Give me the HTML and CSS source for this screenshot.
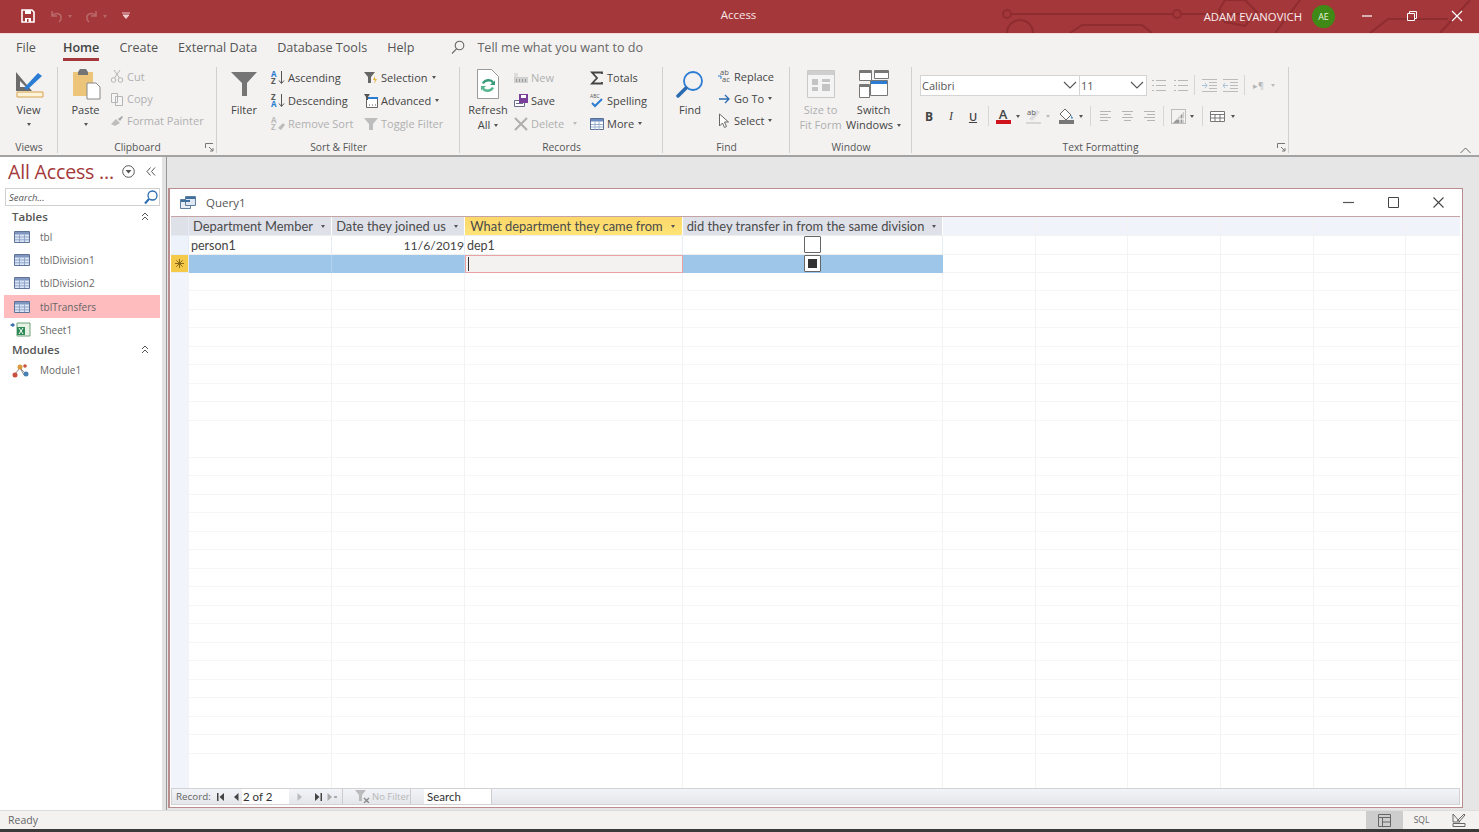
FILE: index.html
```html
<!DOCTYPE html>
<html lang="en">
<head>
<meta charset="utf-8">
<title>Access</title>
<link rel="stylesheet" href="styles.css">
</head>
<body>
<header class="titlebar">
  <svg class="circuit" width="579" height="33" viewBox="0 0 579 33" fill="none" stroke="#8f2c2f" stroke-width="2">
    <circle cx="107" cy="14" r="4"/><path d="M111 14H273"/><circle cx="277" cy="14" r="4"/><path d="M281 14H340"/>
    <circle cx="120" cy="33" r="13"/><path d="M170 33l12-8h60l10 8"/><path d="M345 0l12 12-12 14-20-4-6-12 6-10zM375 33l25-33M470 33l18-14h60M540 33l30-33"/>
  </svg>
  <div class="qat">
    <svg class="qat-save" width="14" height="14" viewBox="0 0 14 14"><path d="M1 1h10l2 2v10H1z" fill="none" stroke="#fff" stroke-width="1.6"/><path d="M4 1h6v4H4zM4 9h6v4H4z" fill="#fff"/><path d="M6 10h1.5v3H6z" fill="#a4373a"/></svg>
    <svg width="15" height="13" viewBox="0 0 15 13" fill="none" stroke="#b9686a" stroke-width="1.6"><path d="M3 1v5h5M3 6c3-4 10-3 9 3 0 1-1 2-2 3"/></svg><i class="qat-caret"></i>
    <svg width="15" height="13" viewBox="0 0 15 13" fill="none" stroke="#b9686a" stroke-width="1.6"><path d="M12 1v5H7M12 6C9 2 2 3 3 9c0 1 1 2 2 3"/></svg><i class="qat-caret"></i>
    <svg class="qat-more" width="10" height="8" viewBox="0 0 10 8"><path d="M1 1h8M2 3l3 3.500L8 3z" fill="#f0d2d2" stroke="#eec9c9"/></svg>
  </div>
  <div class="app-title">Access</div>
  <div class="account">
    <span class="user">ADAM EVANOVICH</span>
    <span class="avatar">AE</span>
    <span class="winbtns">
      <svg width="12" height="12" viewBox="0 0 12 12"><path d="M1 6h10" stroke="#fff" stroke-width="1.2"/></svg>
      <svg width="12" height="12" viewBox="0 0 12 12" fill="none" stroke="#fff"><path d="M1.5 3.5h7v7h-7zM3.5 3.5v-2h7v7h-2"/></svg>
      <svg width="12" height="12" viewBox="0 0 12 12" stroke="#fff" stroke-width="1.2"><path d="M1 1l10 10M11 1L1 11"/></svg>
    </span>
  </div>
</header>

<nav class="tabs">
  <span class="tab">File</span>
  <span class="tab active">Home</span>
  <span class="tab">Create</span>
  <span class="tab">External Data</span>
  <span class="tab">Database Tools</span>
  <span class="tab">Help</span>
  <svg class="tell-icon" width="14" height="15" viewBox="0 0 14 15" fill="none" stroke="#666" stroke-width="1.1"><circle cx="8.5" cy="5.5" r="4.3"/><path d="M5.5 8.8L1 13.5"/></svg>
  <span class="tell">Tell me what you want to do</span>
</nav>

<section class="ribbon">
  <div class="group g-views">
    <div class="group-body">
      <div class="large w-view">
        <svg class="licon" width="30" height="30" viewBox="0 0 30 30"><path d="M2 3v19h16z" fill="#6b6b6b"/><path d="M6 12v6h6z" fill="#f3f2f1"/><path d="M10 19L24 4l4 3-15 14z" fill="#2b7cd3"/><path d="M3 23h26v5H3z" fill="#fdf3d8" stroke="#d8a24a"/></svg>
        <span>View</span><i class="caret"></i>
      </div>
    </div>
    <div class="group-label">Views</div>
  </div>

  <div class="group g-clip">
    <div class="group-body">
      <div class="large w-paste">
        <svg class="licon" width="30" height="32" viewBox="0 0 30 32"><path d="M2 4h20v24H2z" fill="#edc57a"/><path d="M7 4l2-3h6l2 3v3H7z" fill="#757575"/><path d="M16 15h9l4 4v12H16z" fill="#fff" stroke="#888"/></svg>
        <span>Paste</span><i class="caret"></i>
      </div>
      <div class="small-col tight">
        <div class="sm off"><svg width="14" height="14" viewBox="0 0 14 14" fill="none" stroke="#b5b5b5"><circle cx="3.5" cy="11" r="2.3"/><circle cx="10.5" cy="11" r="2.3"/><path d="M4.5 9L10 1M9.5 9L4 1"/></svg><span>Cut</span></div>
        <div class="sm off"><svg width="14" height="14" viewBox="0 0 14 14" fill="#f5f5f5" stroke="#b5b5b5"><path d="M1.500 1.500h6v9h-6zM5.500 4.500h7v9h-7z"/></svg><span>Copy</span></div>
        <div class="sm off"><svg width="14" height="14" viewBox="0 0 14 14"><path d="M1 10l5-5 4 4-5 3z" fill="#bdbdbd"/><path d="M8 5l4-3 1 1-3 4z" fill="#a8a8a8"/></svg><span>Format Painter</span></div>
      </div>
    </div>
    <div class="group-label">Clipboard<svg class="launcher" width="9" height="9" viewBox="0 0 9 9" fill="none" stroke="#777"><path d="M.5 5V.5H8M4 4l4 4M8 5v3H5"/></svg></div>
  </div>

  <div class="group g-sort">
    <div class="group-body">
      <div class="large w-filter">
        <svg class="licon" width="26" height="26" viewBox="0 0 26 26"><path d="M0 1h26L16 12v13h-5V12z" fill="#757575"/></svg>
        <span>Filter</span>
      </div>
      <div class="small-col w-sort1">
        <div class="sm"><svg width="14" height="15" viewBox="0 0 14 15"><text class="az"><tspan x="0" y="7" class="blue">A</tspan><tspan x="0" y="14">Z</tspan></text><path d="M10.500 1v12M8 10.500l2.500 3 2.500-3" fill="none" stroke="#555"/></svg><span>Ascending</span></div>
        <div class="sm"><svg width="14" height="15" viewBox="0 0 14 15"><text class="az"><tspan x="0" y="7">Z</tspan><tspan x="0" y="14" class="blue">A</tspan></text><path d="M10.500 1v12M8 10.500l2.500 3 2.500-3" fill="none" stroke="#555"/></svg><span>Descending</span></div>
        <div class="sm off"><svg width="14" height="15" viewBox="0 0 14 15"><text class="az dim"><tspan x="0" y="7">A</tspan><tspan x="0" y="14">Z</tspan></text><path d="M7 12l5-5 2 2-4 5z" fill="#bbb"/></svg><span>Remove Sort</span></div>
      </div>
      <div class="small-col">
        <div class="sm"><svg width="14" height="14" viewBox="0 0 14 14"><path d="M0 1h11L7 6v6H4V6z" fill="#666"/><path d="M11 5l-2 4h2l-1 4 3-5h-2z" fill="#e8b23a"/></svg><span>Selection</span><i class="caret"></i></div>
        <div class="sm"><svg width="14" height="14" viewBox="0 0 14 14"><path d="M2.500 3.500h11v10h-11z" fill="#fff" stroke="#666"/><path d="M2 3h12v2H2z" fill="#2b7cd3"/><path d="M0 0h6L4 3v3H2V3z" fill="#555"/><path d="M5 11h1M8 11h1M11 11h1" stroke="#555"/></svg><span>Advanced</span><i class="caret"></i></div>
        <div class="sm off"><svg width="14" height="14" viewBox="0 0 14 14"><path d="M0 1h14L9 7v6H5V7z" fill="#bdbdbd"/></svg><span>Toggle Filter</span></div>
      </div>
    </div>
    <div class="group-label">Sort &amp; Filter</div>
  </div>

  <div class="group g-rec">
    <div class="group-body">
      <div class="large w-refresh">
        <svg class="licon" width="24" height="30" viewBox="0 0 24 30"><path d="M1.500.5h14l7 7v22h-21z" fill="#fff" stroke="#999"/><path d="M6 14c2-5 10-5 12-1l1-2v5h-5l2-2c-2-2-6-2-8 1z" fill="#3a9a7a"/><path d="M18 19c-2 5-10 5-12 1l-1 2v-5h5l-2 2c2 2 6 2 8-1z" fill="#58b58f"/></svg>
        <span>Refresh</span><span>All<i class="caret"></i></span>
      </div>
      <div class="small-col w-rec1">
        <div class="sm off"><svg width="14" height="14" viewBox="0 0 14 14"><path d="M0 6h14v6H0z" fill="#d0d0d0"/><path d="M2 8h1v3H2zM5 8h1v3H5zM8 8h1v3H8zM11 8h1v3h-1z" fill="#999"/><path d="M0 2h4v4H0z" fill="#ddd"/></svg><span>New</span></div>
        <div class="sm"><svg width="14" height="14" viewBox="0 0 14 14"><path d="M.5 6.500h10v6H.5z" fill="#fff" stroke="#6a6a8a"/><path d="M2 9h7v1H2z" fill="#6a6a8a"/><path d="M5 0h9v9H5z" fill="#7a3f98"/><path d="M7 1h5v3H7z" fill="#fff"/></svg><span>Save</span></div>
        <div class="sm off"><svg width="14" height="14" viewBox="0 0 14 14" stroke="#b0b0b0" stroke-width="2.200"><path d="M1 1l12 12M13 1L1 13"/></svg><span>Delete</span><i class="caret off-caret del-caret"></i></div>
      </div>
      <div class="small-col">
        <div class="sm"><svg width="14" height="14" viewBox="0 0 14 14" fill="none" stroke="#444" stroke-width="1.800"><path d="M12 3V1.500H2L7 7l-5 5.500h10V11"/></svg><span>Totals</span></div>
        <div class="sm"><svg width="14" height="15" viewBox="0 0 14 15"><text x="0" y="5" class="abc">ABC</text><path d="M2 10l3 3 7-7" fill="none" stroke="#2b7cd3" stroke-width="2"/></svg><span>Spelling</span></div>
        <div class="sm"><svg width="14" height="14" viewBox="0 0 14 14"><path d="M.5 1.500h13v11H.5z" fill="#fff" stroke="#5a6f96"/><path d="M1 2h12v2.500H1z" fill="#6a8ac0"/><path d="M1 7.500h12M1 10h12M5 4v9M9 4v9" stroke="#9bb0d0"/></svg><span>More</span><i class="caret"></i></div>
      </div>
    </div>
    <div class="group-label">Records</div>
  </div>

  <div class="group g-find">
    <div class="group-body">
      <div class="large w-find">
        <svg class="licon" width="28" height="28" viewBox="0 0 28 28" fill="none"><circle cx="17" cy="11" r="9" stroke="#2b7cd3" stroke-width="1.800"/><path d="M10 18l-8 8" stroke="#2b6cb0" stroke-width="3.500" stroke-linecap="round"/></svg>
        <span>Find</span>
      </div>
      <div class="small-col tight">
        <div class="sm"><svg width="14" height="14" viewBox="0 0 14 14"><text class="abc big"><tspan x="3" y="6">ab</tspan><tspan x="5" y="13">ac</tspan></text><path d="M1 7h3v3" fill="none" stroke="#2b7cd3"/></svg><span>Replace</span></div>
        <div class="sm"><svg width="14" height="14" viewBox="0 0 14 14" fill="none" stroke="#2b6cb0" stroke-width="1.300"><path d="M2 7h10M8 3l4 4-4 4"/></svg><span>Go To</span><i class="caret"></i></div>
        <div class="sm"><svg width="14" height="15" viewBox="0 0 14 15" fill="#fff" stroke="#666"><path d="M2.500 1l9 8H7.500l2 4.500-2 1-2-4.500-3 3z"/></svg><span>Select</span><i class="caret"></i></div>
      </div>
    </div>
    <div class="group-label">Find</div>
  </div>

  <div class="group g-win">
    <div class="group-body">
      <div class="large w-size off">
        <svg class="licon" width="30" height="30" viewBox="0 0 30 30"><path d="M1.500 1.500h27v27h-27z" fill="#f4f4f4" stroke="#c8c8c8"/><path d="M2 2h26v4H2z" fill="#cfcfcf"/><path d="M6 10h6v6H6zM16 10h8v3h-8zM16 15h8v7h-8zM6 18h6v4H6z" fill="#c4c4c4"/></svg>
        <span>Size to</span><span>Fit Form</span>
      </div>
      <div class="large w-switch">
        <svg class="licon" width="30" height="30" viewBox="0 0 30 30" fill="#fff" stroke="#777"><path d="M.5 1.500h12v10H.5zM15.500 1.500h14v8h-14zM.5 15.500h10v13H.5z"/><path d="M1 2h11v2H1zM16 2h13v2H16zM1 16h9v2H1z" fill="#777" stroke="none"/><path d="M11.500 11.500h17v15h-17z"/><path d="M12 12h16v3H12z" fill="#2b7cd3" stroke="none"/></svg>
        <span>Switch</span><span>Windows<i class="caret"></i></span>
      </div>
    </div>
    <div class="group-label">Window</div>
  </div>

  <div class="group g-text">
    <div class="group-body col">
      <div class="fmt-row top">
        <div class="combo font"><span>Calibri</span><svg width="14" height="8" viewBox="0 0 14 8" fill="none" stroke="#555" stroke-width="1.100"><path d="M1 1l6 6 6-6"/></svg></div>
        <div class="combo size"><span>11</span><svg width="14" height="8" viewBox="0 0 14 8" fill="none" stroke="#555" stroke-width="1.100"><path d="M1 1l6 6 6-6"/></svg></div>
        <svg class="fi f-l1" width="15" height="14" viewBox="0 0 15 14" stroke="#b8b8b8"><path d="M5 2.500h10M5 7.500h10M5 12.500h10M1 2.500h2M1 7.500h2M1 12.500h2"/></svg>
        <svg class="fi f-l2" width="15" height="14" viewBox="0 0 15 14" stroke="#b8b8b8"><path d="M5 2.500h10M5 7.500h10M5 12.500h10M1 2.500h2M1 7.500h2M1 12.500h2"/></svg>
        <i class="vsep s1"></i>
        <svg class="fi f-i1" width="15" height="14" viewBox="0 0 15 14" stroke="#bbb"><path d="M0 1.500h15M7 4.500h8M7 7.500h8M7 10.500h8M0 13.500h15" /><path d="M0 7.500h5M3 5l2 2.500L3 10" fill="none" stroke="#a9c3d8"/></svg>
        <svg class="fi f-i2" width="15" height="14" viewBox="0 0 15 14" stroke="#bbb"><path d="M0 1.500h15M7 4.500h8M7 7.500h8M7 10.500h8M0 13.500h15"/><path d="M5 7.500H0M2 5L0 7.500 2 10" fill="none" stroke="#a9c3d8"/></svg>
        <i class="vsep s2"></i>
        <span class="pil">▸¶</span><i class="caret off-caret"></i>
      </div>
      <div class="fmt-row bottom">
        <b class="fb">B</b><em class="fb fi2">I</em><u class="fb fu">U</u>
        <i class="vsep s3"></i>
        <span class="colorbtn"><span class="a-letter">A</span><i class="bar red"></i></span><i class="caret"></i>
        <svg class="fi hl" width="16" height="16" viewBox="0 0 16 16"><path d="M3 11l8-9 3 2-8 9z" fill="#ddd"/><text x="1" y="7" class="abc big">ab</text><path d="M0 14h15v2H0z" fill="#d6d6d6"/></svg><i class="caret off-caret"></i>
        <span class="colorbtn fill"><svg width="16" height="12" viewBox="0 0 16 12"><path d="M7 1l6 6-5 5-6-6z" fill="#fff" stroke="#666"/><path d="M13 7c1 2 2 2 2 3s-2 1-2 0z" fill="#4a90c8"/></svg><i class="bar grey"></i></span><i class="caret"></i>
        <i class="vsep s4"></i>
        <svg class="fi al" width="13" height="12" viewBox="0 0 13 12" stroke="#b5b5b5"><path d="M1 1.500h11M1 4.500h8M1 7.500h11M1 10.500h8"/></svg>
        <svg class="fi al2" width="13" height="12" viewBox="0 0 13 12" stroke="#b5b5b5"><path d="M1 1.500h11M3 4.500h7M1 7.500h11M3 10.500h7"/></svg>
        <svg class="fi al2" width="13" height="12" viewBox="0 0 13 12" stroke="#b5b5b5"><path d="M1 1.500h11M4 4.500h8M1 7.500h11M4 10.500h8"/></svg>
        <i class="vsep s5"></i>
        <svg class="fi gr" width="15" height="15" viewBox="0 0 15 15" fill="none"><path d="M.5.500h14v14H.5z" stroke="#888" stroke-dasharray="1 1"/><path d="M2 14L13 3v11z" fill="#999"/><path d="M6 10h8M9 7v7M12 4v10" stroke="#fff"/></svg><i class="caret"></i>
        <i class="vsep s6"></i>
        <svg class="fi gr2" width="15" height="11" viewBox="0 0 15 11" fill="#fff" stroke="#777"><path d="M.5.500h14v10H.5z"/><path d="M1 3.500h13M1 7h13M5 3v7M10 3v7"/></svg><i class="caret gr2c"></i>
      </div>
    </div>
    <div class="group-label">Text Formatting<svg class="launcher" width="9" height="9" viewBox="0 0 9 9" fill="none" stroke="#777"><path d="M.5 5V.5H8M4 4l4 4M8 5v3H5"/></svg></div>
  </div>
  <svg class="collapse" width="11" height="7" viewBox="0 0 11 7" fill="none" stroke="#666"><path d="M.5 6l5-5 5 5"/></svg>
</section>

<main class="workspace">
  <aside class="navpane">
    <div class="nav-head">
      <span class="nav-title">All Access ...</span>
      <svg width="13" height="13" viewBox="0 0 13 13" fill="none"><circle cx="6.500" cy="6.500" r="5.800" stroke="#555"/><path d="M3.500 5h6l-3 3.500z" fill="#555"/></svg>
      <svg class="nav-shut" width="10" height="9" viewBox="0 0 10 9" fill="none" stroke="#555"><path d="M4.500.5L1 4.500l3.500 4M9 .5L5.500 4.500 9 8.500"/></svg>
    </div>
    <div class="nav-search"><span>Search...</span><svg width="14" height="15" viewBox="0 0 14 15" fill="none" stroke="#2b6cb0"><circle cx="8.500" cy="5.500" r="4.500" stroke-width="1.300"/><path d="M5 9l-4 4.500" stroke-width="2"/></svg></div>
    <div class="nav-sec"><span>Tables</span><svg width="8" height="9" viewBox="0 0 8 9" fill="none" stroke="#555"><path d="M1 4l3-3 3 3M1 8l3-3 3 3"/></svg></div>
    <div class="nav-item"><svg class="tbl" width="16" height="12" viewBox="0 0 16 12"><use href="#tbl-icon"/></svg><span>tbl</span></div>
    <div class="nav-item"><svg class="tbl" width="16" height="12" viewBox="0 0 16 12"><use href="#tbl-icon"/></svg><span>tblDivision1</span></div>
    <div class="nav-item"><svg class="tbl" width="16" height="12" viewBox="0 0 16 12"><use href="#tbl-icon"/></svg><span>tblDivision2</span></div>
    <div class="nav-item selected"><svg class="tbl" width="16" height="12" viewBox="0 0 16 12"><use href="#tbl-icon"/></svg><span>tblTransfers</span></div>
    <div class="nav-item wide"><svg class="xl" width="21" height="15" viewBox="0 0 21 15"><path d="M0 3l3-2 2 2-2 2z" fill="#3a6fb0"/><path d="M7 1h13v13H7z" fill="#e6f2e6" stroke="#6fa078"/><path d="M7 5h8v8H7z" fill="#2e8b57"/><path d="M9 6l4 6M13 6l-4 6" stroke="#fff"/></svg><span>Sheet1</span></div>
    <div class="nav-sec mod"><span>Modules</span><svg width="8" height="9" viewBox="0 0 8 9" fill="none" stroke="#555"><path d="M1 4l3-3 3 3M1 8l3-3 3 3"/></svg></div>
    <div class="nav-item wide"><svg class="mi" width="18" height="15" viewBox="0 0 18 15"><path d="M2 12L8 5l4 7M8 5l6 6" stroke="#8a8a8a" fill="none"/><circle cx="3" cy="12" r="2.500" fill="#c8503c"/><circle cx="8" cy="4" r="2.500" fill="#d89a3a"/><circle cx="14" cy="11" r="2.500" fill="#4a7fb5"/><circle cx="13" cy="3" r="1.800" fill="#c8503c"/></svg><span>Module1</span></div>
  </aside>

  <div class="mdi">
    <section class="docwin">
      <div class="doc-title">
        <svg width="16" height="13" viewBox="0 0 16 13"><path d="M.5 3.500h10v9H.5z" fill="#e8eef6" stroke="#5f7f9f"/><path d="M5.500.5h10v9h-10z" fill="#dfe8f2" stroke="#5f7f9f"/><path d="M6 1h9v2H6zM1 4h9v2H1z" fill="#3f6f9f"/></svg>
        <span class="doc-name">Query1</span>
        <span class="doc-btns">
          <svg width="11" height="11" viewBox="0 0 11 11"><path d="M0 5.500h11" stroke="#555" stroke-width="1.200"/></svg>
          <svg width="11" height="11" viewBox="0 0 11 11" fill="none" stroke="#444"><path d="M.5.500h10v10H.5z"/></svg>
          <svg width="11" height="11" viewBox="0 0 11 11" stroke="#444" stroke-width="1.100"><path d="M.5.500l10 10M10.500.5l-10 10"/></svg>
        </span>
      </div>
      <div class="sheet">
        <div class="ds-row head">
          <div class="c sel"></div>
          <div class="c h">Department Member<i class="caret"></i></div>
          <div class="c h">Date they joined us<i class="caret"></i></div>
          <div class="c h hot">What department they came from<i class="caret"></i></div>
          <div class="c h">did they transfer in from the same division<i class="caret"></i></div>
          <div class="c x"></div><div class="c x"></div><div class="c x"></div><div class="c x"></div><div class="c x"></div><div class="c x last"></div>
        </div>
        <div class="ds-row">
          <div class="c sel"></div>
          <div class="c t">person1</div>
          <div class="c t right">11/6/2019</div>
          <div class="c t">dep1</div>
          <div class="c mid"><i class="check"></i></div>
          <div class="c x"></div><div class="c x"></div><div class="c x"></div><div class="c x"></div><div class="c x"></div><div class="c x last"></div>
        </div>
        <div class="ds-row newrow">
          <div class="c sel star"><svg width="9" height="9" viewBox="0 0 9 9" stroke="#8a6a1a"><path d="M4.500 0v9M0 4.500h9M1.300 1.300l6.400 6.400M7.700 1.300L1.300 7.700"/></svg></div>
          <div class="c b"></div>
          <div class="c b"></div>
          <div class="c focus"><i class="cursor"></i></div>
          <div class="c b mid"><i class="check on"></i></div>
          <div class="c x"></div><div class="c x"></div><div class="c x"></div><div class="c x"></div><div class="c x"></div><div class="c x last"></div>
        </div>
        <div class="ds-row fill">
          <div class="c sel"></div><div class="c"></div><div class="c"></div><div class="c"></div><div class="c"></div>
          <div class="c x"></div><div class="c x"></div><div class="c x"></div><div class="c x"></div><div class="c x"></div><div class="c x last"></div>
        </div>
      </div>
      <div class="recnav">
        <span class="rec-label">Record:</span>
        <svg class="rb r1" width="8" height="8" viewBox="0 0 8 8" fill="#444"><path d="M0 0h1.500v8H0zM7 0v8L2.500 4z"/></svg>
        <svg class="rb r2" width="6" height="8" viewBox="0 0 6 8" fill="#444"><path d="M5.500 0v8L1 4z"/></svg>
        <span class="rec-input">2 of 2</span>
        <svg class="rb r3" width="6" height="8" viewBox="0 0 6 8" fill="#bbb"><path d="M.5 0v8L5 4z"/></svg>
        <svg class="rb r4" width="8" height="8" viewBox="0 0 8 8" fill="#444"><path d="M1 0v8l4.500-4zM6.500 0H8v8H6.500z"/></svg>
        <svg class="rb r5" width="10" height="8" viewBox="0 0 10 8" fill="#aaa"><path d="M.5 0v8L5 4zM7 3h3v2H7z"/></svg>
        <i class="rec-sep"></i>
        <svg class="rb r6" width="15" height="13" viewBox="0 0 15 13"><path d="M0 0h11L7 5v6H4V5z" fill="#bbb"/><path d="M9 8l5 5M14 8l-5 5" stroke="#888" stroke-width="1.300"/></svg>
        <span class="rec-off">No Filter</span>
        <i class="rec-sep s"></i>
        <span class="rec-search">Search</span>
      </div>
    </section>
  </div>
</main>

<footer class="statusbar">
  <span>Ready</span>
  <div class="views">
    <span class="v on"><svg width="13" height="13" viewBox="0 0 13 13" fill="none" stroke="#666"><path d="M.5.500h12v12H.5zM.5 3.500h12M4.500 3.500v9M4.500 8h8"/></svg></span>
    <span class="v sql">SQL</span>
    <span class="v"><svg width="14" height="14" viewBox="0 0 14 14" fill="none" stroke="#666"><path d="M1 1v8h7zM5 8l7-7 1 1-6 7"/><path d="M1 10.500h12v3H1z"/></svg></span>
  </div>
</footer>

<svg class="defs" width="0" height="0">
  <symbol id="tbl-icon" viewBox="0 0 16 12">
    <path d="M.5.500h15v11H.5z" fill="#dbe5f5" stroke="#5f7396"/><path d="M1 1h14v2.500H1z" fill="#7f97c0"/><path d="M1 6h14M1 8.800h14M5.500 3.500V11M10.500 3.500V11" stroke="#90a5c8"/>
  </symbol>
</svg>
</body>
</html>
```

FILE: styles.css
```css
* { box-sizing: border-box; }
html, body { margin: 0; height: 832px; overflow: hidden; }
body {
  display: flex; flex-direction: column; width: 1479px;
  font-family: "Open Sans", "Noto Sans", sans-serif; font-size: 11px; color: #444; background: #f3f2f1;
}
.defs { position: absolute; }
i { font-style: normal; }

/* title bar */
.titlebar {
  position: relative; flex: 0 0 34px; display: flex; align-items: center; height: 34px;
  background: #a4373a; border-bottom: 1px solid #f5dada; color: #fff; padding-bottom: 1px;
}
.circuit { position: absolute; left: 900px; top: 0; }
.qat { position: relative; display: flex; align-items: center; padding-left: 21px; width: 600px; }
.qat svg { margin-right: 3px; }
.qat-save { margin-right: 14px !important; }
.qat-caret { width: 0; height: 0; border: 2px solid transparent; border-top: 3px solid #b9686a; margin: 2px 12px 0 1px; }
.qat-more { margin-left: 2px; }
.app-title { position: relative; width: 277px; text-align: center; font-size: 11.5px; color: #f9e6e6; padding-bottom: 3px; }
.account { position: relative; display: flex; align-items: center; margin-left: auto; }
.user { font-size: 11.3px; color: #fbeeee; }
.avatar {
  width: 23px; height: 23px; margin-left: 10px; border-radius: 50%; background: #3f8a16; color: #e6f2da;
  font-size: 9px; display: flex; align-items: center; justify-content: center;
}
.winbtns { display: flex; gap: 33px; margin-left: 26px; padding-right: 16px; }

/* tabs */
.tabs { flex: 0 0 27px; display: flex; align-items: center; position: relative; font-size: 12.6px; }
.tab { position: relative; color: #555; padding: 0 10px; height: 100%; display: flex; align-items: center; white-space: nowrap; }
.tab:first-child { padding-left: 16px; padding-right: 17px; }
.tab.active { font-weight: 600; color: #444; padding: 0; margin-right: 10px; margin-left: 10px; }
.tab.active::after { content: ""; position: absolute; left: 0; right: 0; bottom: 0; height: 3px; background: #a4373a; }
.tell-icon { margin-right: 12px; margin-left: 27px; }
.tell { color: #666; font-size: 12.6px; }

/* ribbon */
.ribbon { position: relative; flex: 0 0 96px; display: flex; background: #f3f2f1; border-bottom: 2px solid #a3a3a3; }
.group { display: flex; flex-direction: column; position: relative; padding-top: 5px; }
.group::after { content: ""; position: absolute; right: 0; top: 6px; bottom: 2px; width: 1px; background: #d0d0d0; }
.group-body { flex: 1; display: flex; }
.group-body.col { flex-direction: column; }
.group-label { position: relative; height: 16px; text-align: center; font-size: 10.3px; line-height: 16px; color: #555; }
.launcher { position: absolute; right: 3px; top: 4px; }
.g-views { width: 58px; } .g-clip { width: 159px; } .g-sort { width: 243px; }
.g-rec { width: 203px; } .g-find { width: 127px; } .g-win { width: 122px; } .g-text { width: 377px; }

.large { display: flex; flex-direction: column; align-items: center; white-space: nowrap; line-height: 15px; }
.large .licon { height: 34px; margin-top: 1px; margin-bottom: 1px; }
.large.off { color: #b0b0b0; }
.w-view { width: 57px; }
.w-paste { width: 55px; margin-right: -3px; }
.w-filter { width: 54px; }
.w-sort1 { width: 93px; }
.w-refresh { width: 56px; margin-right: -2px; }
.w-rec1 { width: 76px; }
.w-find { width: 54px; }
.w-size { width: 61px; }
.w-switch { width: 45px; margin-left: 0; }
.g-text .group-body { padding-left: 8px; }

.small-col { display: flex; flex-direction: column; }
.small-col .sm { height: 23px; display: flex; align-items: center; white-space: nowrap; }
.small-col.tight { margin-top: -1px; }
.small-col.tight .sm { height: 22.4px; }
.sm svg { flex: none; margin-right: 3px; overflow: visible; }
.sm.off { color: #b0b0b0; }
.az { font: 700 8px "Open Sans", sans-serif; fill: #555; }
.az .blue { fill: #2b7cd3; }
.az.dim { fill: #bbb; }
.abc { font: 5px "Open Sans", sans-serif; fill: #555; }
.abc.big { font-size: 7.5px; }

.caret { display: inline-block; width: 0; height: 0; margin-left: 4px; vertical-align: 2px; border: 2.5px solid transparent; border-top: 3px solid #555; border-bottom-width: 0; flex: none; }
.off-caret { border-top-color: #bbb; }
.del-caret { margin-left: 9px; }
.large > .caret { margin: 6px 0 0; }

/* text formatting */
.fmt-row { display: flex; align-items: center; }
.fmt-row.top { height: 20px; margin-top: 9px; }
.fmt-row.bottom { height: 20px; margin-top: 11px; margin-left: -2px; }
.combo { display: flex; align-items: center; justify-content: space-between; height: 21px; background: #fff; border: 1px solid #d4d4d4; padding: 0 2px 0 1px; font-size: 11px; color: #555; }
.combo.font { width: 160px; }
.combo.size { width: 67px; border-left: 0; }
.fi { flex: none; }
.f-l1 { margin-left: 4px; } .f-l2 { margin-left: 7px; }
.vsep { flex: none; width: 1px; height: 20px; background: #d6d6d6; }
.s1 { margin-left: 6px; } .f-i1 { margin-left: 7px; } .f-i2 { margin-left: 6px; } .s2 { margin-left: 6px; }
.pil { margin-left: 8px; color: #b5b5b5; font-size: 9px; }
.pil + .caret { margin-left: 7px; }
.fb { width: 22px; text-align: center; font-family: "Liberation Serif", serif; font-size: 12px; color: #444; text-decoration: none; }
.fu { text-decoration: underline; font-family: "Open Sans", sans-serif; font-weight: 600; font-size: 11px; }
b.fb { font-family: "Open Sans", sans-serif; font-size: 12px; }
.s3 { margin-left: 4px; }
.colorbtn { display: flex; flex-direction: column; align-items: center; width: 16px; margin-left: 6px; line-height: 12px; }
.a-letter { font-size: 13px; font-weight: 600; color: #444; }
.bar { display: block; width: 15px; height: 4px; }
.bar.red { background: #d0121b; }
.bar.grey { background: #777; }
.colorbtn + .caret { margin-left: 5px; margin-right: 0; }
.hl { margin-left: 6px; }
.hl + .caret { margin-left: 4px; }
.colorbtn.fill { margin-left: 8px; }
.s4 { margin-left: 7px; }
.al { margin-left: 8px; } .al2 { margin-left: 9px; }
.s5 { margin-left: 7px; } .gr { margin-left: 7px; }
.s6 { margin-left: 8px; } .gr2 { margin-left: 7px; }
.gr2c { margin-left: 6px; }
.collapse { position: absolute; right: 8px; bottom: 1px; }

/* workspace */
.workspace { flex: 1; display: flex; min-height: 0; }
.navpane { width: 166px; flex: none; background: #fff; border-right: 4px solid #e3e3e3; padding: 4px 2px 0 4px; }
.nav-head { display: flex; align-items: center; height: 26px; padding: 0 0 6px 4px; }
.nav-title { width: 114px; font-size: 19.6px; color: #a4373a; white-space: nowrap; letter-spacing: -.2px; }
.nav-shut { margin-left: 11px; }
.nav-search { display: flex; align-items: center; justify-content: space-between; height: 18px; margin: 1px 0 0 1px; border: 1px solid #d0d0d0; padding: 0 1px 0 3px; }
.nav-search span { font-style: italic; font-size: 9.5px; color: #555; }
.nav-sec { display: flex; justify-content: space-between; align-items: center; height: 18px; margin-top: 1px; padding: 0 11px 0 8px; font-weight: 600; font-size: 11.5px; color: #555; }
.nav-sec.mod { height: 17px; margin-top: 0; }
.nav-item { display: flex; align-items: center; height: 23.3px; font-size: 10px; color: #666; padding-left: 10px; white-space: nowrap; }
.nav-item.selected { background: #ffbcbf; }
.nav-item.wide { padding-left: 6px; }
.nav-item .tbl { margin-right: 10px; }
.nav-item .xl { margin: 0 9px 0 0; }
.nav-item .mi { margin: 0 10px 0 2px; }

.mdi { flex: 1; background: #e6e6e6; padding: 31px 16px 2px 1px; border-left: 1px solid #999; min-width: 0; }
.docwin { height: 100%; display: flex; flex-direction: column; background: #fff; border: 1px solid #ba8d8f; border-left-width: 2px; padding: 0 2px 2px 1px; }
.doc-title { flex: 0 0 28px; display: flex; align-items: center; padding-left: 9px; border-bottom: 1px solid #c6a3a4; }
.doc-name { margin-left: 10px; font-size: 11.5px; color: #555; }
.doc-btns { margin-left: auto; display: flex; gap: 34px; padding-right: 16px; }

.sheet { flex: 1; display: flex; flex-direction: column; min-height: 0; font-family: Lato, "Open Sans", sans-serif; font-size: 12.5px; color: #444; }
.ds-row { display: grid; flex: 0 0 18.5px; grid-template-columns: 18px 143px 133px 218px 260px 93px 92px 93px 93px 92px 1fr; }
.ds-row.head { flex-basis: 19px; font-size: 12.9px; color: #4a4a4a; }
.c { border-right: 1px solid #e8ecf4; border-bottom: 1px solid #eee; padding: 0 2px; display: flex; align-items: center; white-space: nowrap; min-width: 0; }
.c.t { padding-top: 1px; }
.c.x { border-color: #f3f3f3; }
.c.x.last { border-right: 0; }
.c.sel { background: #eef2fa; border-color: #e6eaf2; padding: 0; justify-content: center; }
.head .c { background: #f0f3fa; }
.head .c.sel { background: #dfe1e9; }
.c.h { background: #dfe1e9 !important; border-right: 1px solid #fff; justify-content: center; padding: 0 2px 0 0; }
.c.h .caret { margin-left: 8px; }
.c.h.hot { background: linear-gradient(#fcd76a, #ffe477) !important; }
.c.right { justify-content: flex-end; padding-right: 0; font-size: 12.2px; }
.c.mid { justify-content: center; }
.check { display: block; width: 17px; height: 17px; background: #fff; border: 1px solid #666; border-radius: 1px; }
.check.on { position: relative; }
.check.on::after { content: ""; position: absolute; inset: 3px; background: #333; }
.newrow .c.b { background: #9dc6e8; border-color: #9dc6e8; }
.newrow .c.b:not(.mid) { border-right-color: #b5d3ec; }
.c.star { background: #f5c94a; }
.c.focus { background: #f3f2f1; border: 1px solid #e8a3a6; padding: 0 0 0 2px; }
.cursor { display: block; width: 1px; height: 14px; background: #333; }
.ds-row.fill { flex: 1; background: repeating-linear-gradient(#fff 0 17.5px, #f6f6f6 17.5px 18.500px); }
.fill .c { border-bottom: 0; border-right-color: #f3f3f3; }
.fill .c.sel { background: #f1f4fb; }

.recnav {
  flex: 0 0 17px; position: relative; display: flex; align-items: center; font-size: 10.5px; color: #666;
  background: linear-gradient(#f2f4f9, #e4e6ea); border: 1px solid #d2d2d2; padding-left: 4px;
}
.rec-label { width: 40px; font-size: 9.8px; }
.rb { flex: none; }
.r1 { margin-left: 1px; } .r2 { margin-left: 8px; }
.rec-input { width: 47px; height: 15px; line-height: 15px; margin-left: 3px; background: #fff; padding-left: 1px; color: #333; font-family: Lato, sans-serif; font-size: 11.5px; }
.r3 { margin-left: 8px; } .r4 { margin-left: 11px; } .r5 { margin-left: 5px; }
.rec-sep { width: 1px; height: 15px; background: #ccc; margin-left: 5px; }
.r6 { margin-left: 12px; }
.rec-off { margin-left: 2px; color: #b8b8b8; font-size: 9.500px; width: 38px; }
.rec-sep.s { margin-left: 0; }
.rec-search { width: 68px; height: 15px; line-height: 15px; margin-left: 13px; background: #fff; padding-left: 3px; border-right: 1px solid #ccc; color: #333; font-family: Lato, sans-serif; font-size: 11.5px; }

/* status bar */
.statusbar { flex: 0 0 22px; display: flex; align-items: stretch; justify-content: space-between; padding-left: 8px; border-top: 1px solid #ddd; border-bottom: 3px solid #3a3a3a; font-size: 10.5px; color: #666; line-height: 18px; }
.views { display: flex; margin-right: 2px; }
.v { width: 37px; display: flex; align-items: center; justify-content: center; }
.v.on { background: #cdcdcd; }
.v.sql { font-size: 8.5px; }
```
